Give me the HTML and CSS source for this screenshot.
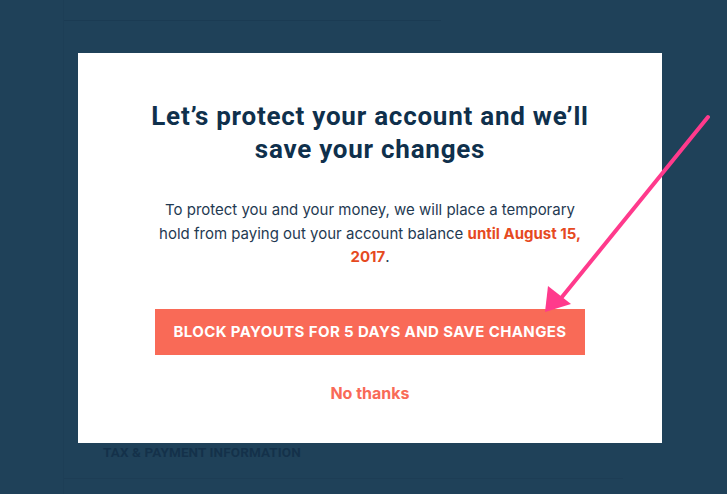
FILE: index.html
```html
<!DOCTYPE html>
<html>
<head>
<meta charset="utf-8">
<link rel="stylesheet" href="styles.css">
</head>
<body>
<div class="page">
  <div class="bg-card">
    <div class="bg-top"></div>
    <div class="bg-spacer"></div>
    <div class="bg-heading">TAX &amp; PAYMENT INFORMATION</div>
    <div class="bg-rule"></div>
  </div>
</div>

<div class="overlay">
  <div class="modal">
    <h1 class="title">Let’s protect your account and we’ll save your changes</h1>
    <p class="body">To protect you and your money, we will place a temporary hold from paying out your account balance <span class="hl">until August 15,</span> <span class="hl">2017</span>.</p>
    <button class="cta">BLOCK PAYOUTS FOR 5 DAYS AND SAVE CHANGES</button>
    <a class="decline">No thanks</a>
  </div>
</div>

<svg class="arrow" width="727" height="494" viewBox="0 0 727 494">
  <line x1="708" y1="117" x2="562" y2="297" stroke="#ff3a8c" stroke-width="4" stroke-linecap="round"/>
  <polygon points="545,312 548,286 571,304" fill="#ff3a8c"/>
</svg>
</body>
</html>
```
FILE: styles.css
```css
html, body {
  margin: 0;
  padding: 0;
  width: 727px;
  height: 494px;
  overflow: hidden;
  background: #1f4159;
  font-family: "Inter", "Roboto", sans-serif;
}

.page {
  padding-left: 63px;
  width: 560px;
}

.bg-card {
  border-left: 1px solid #1d3e56;
  height: 494px;
  display: flex;
  flex-direction: column;
}

.bg-top {
  height: 20px;
  border-bottom: 1px solid #1b3b53;
  width: 377px;
}

.bg-spacer {
  height: 424px;
}

.bg-heading {
  padding-left: 39px;
  font-family: "Roboto", sans-serif;
  font-size: 13.5px;
  font-weight: 700;
  color: #14314a;
  letter-spacing: 0.1px;
  line-height: 14px;
}

.bg-rule {
  margin-top: 19px;
  border-bottom: 1px solid #1d3d55;
}

.overlay {
  position: absolute;
  left: 0;
  top: 0;
  width: 727px;
  height: 494px;
}

.modal {
  position: absolute;
  left: 78px;
  top: 53px;
  width: 584px;
  height: 390px;
  background: #ffffff;
  box-sizing: border-box;
  padding: 47px 40px 0;
  display: flex;
  flex-direction: column;
  align-items: center;
  text-align: center;
}

.title {
  margin: 0;
  width: 470px;
  font-family: "Roboto", sans-serif;
  font-size: 26px;
  line-height: 33px;
  font-weight: 700;
  color: #0f304c;
  letter-spacing: 0.75px;
}

.body {
  margin: 32px 0 0;
  width: 440px;
  font-size: 15px;
  line-height: 23.5px;
  color: #1f3a52;
  font-weight: 400;
}

.hl {
  color: #e64a1f;
  font-weight: 700;
}

.cta {
  margin-top: 40px;
  width: 430px;
  height: 46px;
  border: none;
  background: #f96a57;
  color: #ffffff;
  font-family: inherit;
  font-size: 15px;
  font-weight: 700;
  letter-spacing: 0.4px;
  padding: 0;
}

.decline {
  margin-top: 28px;
  font-size: 16px;
  font-weight: 700;
  color: #f96a57;
}

.arrow {
  position: absolute;
  left: 0;
  top: 0;
}
```
